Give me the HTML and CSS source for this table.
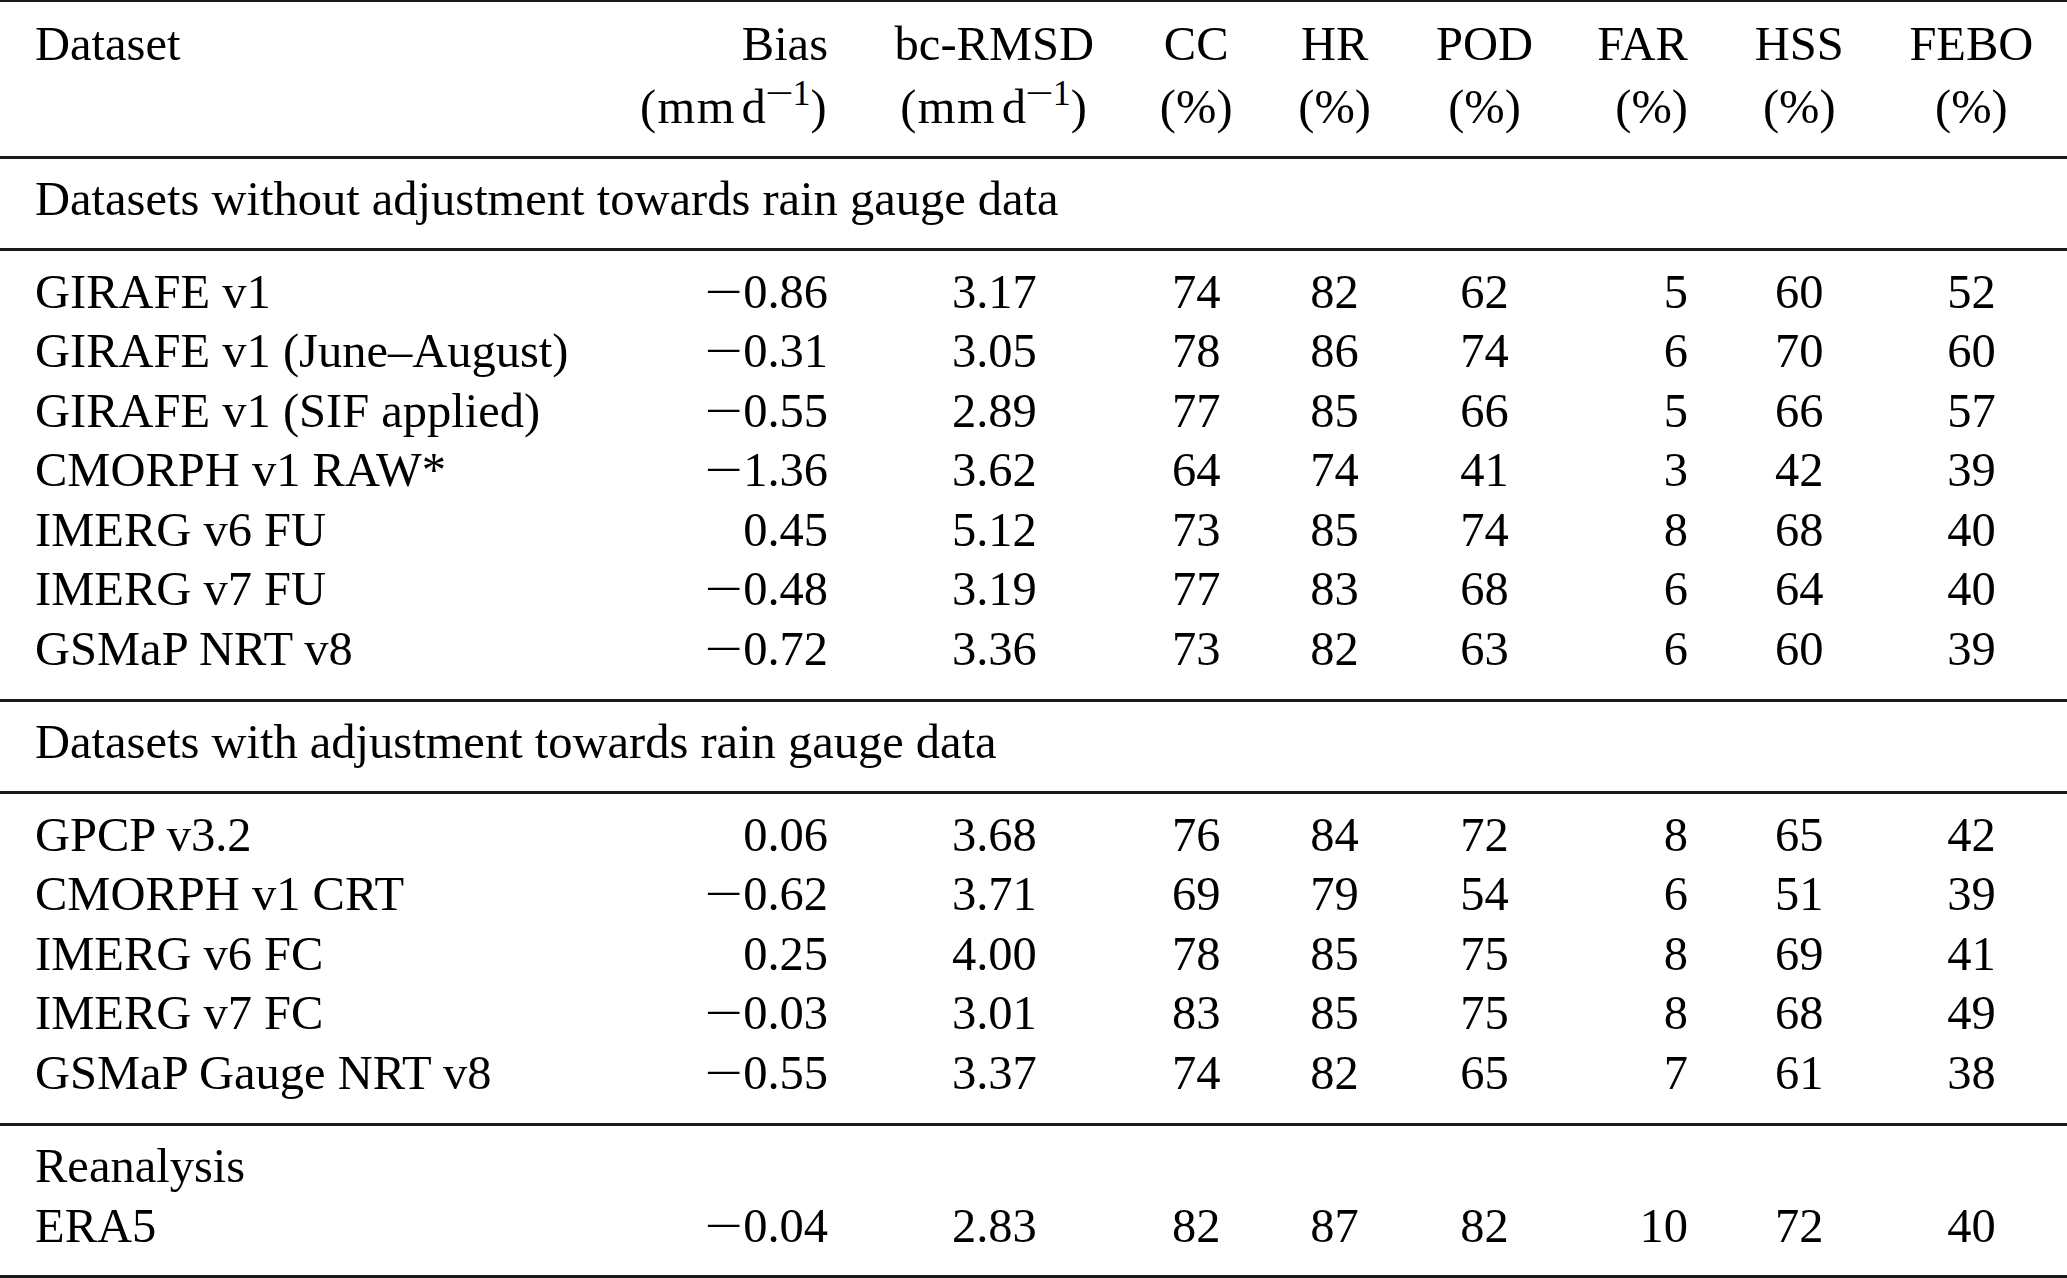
FILE: index.html
```html
<!DOCTYPE html>
<html lang="en">
<head>
<meta charset="utf-8">
<title>Dataset evaluation scores</title>
<link rel="stylesheet" href="styles.css">
</head>
<body>
<table class="results">
  <colgroup>
    <col class="w-name"><col class="w-bias"><col class="w-rmsd"><col class="w-cc"><col class="w-hr">
    <col class="w-pod"><col class="w-far"><col class="w-hss"><col class="w-febo">
  </colgroup>
  <thead>
    <tr>
      <th>Dataset</th>
      <th><span class="line">Bias</span><span class="line unit">(mm&#8202;d<sup class="exp"><span class="minus">−</span>1</sup>)</span></th>
      <th><span class="line">bc-RMSD</span><span class="line unit">(mm&#8202;d<sup class="exp"><span class="minus">−</span>1</sup>)</span></th>
      <th><span class="line">CC</span><span class="line">(%)</span></th>
      <th><span class="line">HR</span><span class="line">(%)</span></th>
      <th><span class="line">POD</span><span class="line">(%)</span></th>
      <th><span class="line">FAR</span><span class="line">(%)</span></th>
      <th><span class="line">HSS</span><span class="line">(%)</span></th>
      <th><span class="line">FEBO</span><span class="line">(%)</span></th>
    </tr>
  </thead>
  <tbody class="section">
    <tr><td colspan="9">Datasets without adjustment towards rain gauge data</td></tr>
  </tbody>
  <tbody class="group">
    <tr><td>GIRAFE v1</td><td><span class="minus">−</span>0.86</td><td>3.17</td><td>74</td><td>82</td><td>62</td><td>5</td><td>60</td><td>52</td></tr>
    <tr><td>GIRAFE v1 (June–August)</td><td><span class="minus">−</span>0.31</td><td>3.05</td><td>78</td><td>86</td><td>74</td><td>6</td><td>70</td><td>60</td></tr>
    <tr><td>GIRAFE v1 (SIF applied)</td><td><span class="minus">−</span>0.55</td><td>2.89</td><td>77</td><td>85</td><td>66</td><td>5</td><td>66</td><td>57</td></tr>
    <tr><td>CMORPH v1 RAW*</td><td><span class="minus">−</span>1.36</td><td>3.62</td><td>64</td><td>74</td><td>41</td><td>3</td><td>42</td><td>39</td></tr>
    <tr><td>IMERG v6 FU</td><td>0.45</td><td>5.12</td><td>73</td><td>85</td><td>74</td><td>8</td><td>68</td><td>40</td></tr>
    <tr><td>IMERG v7 FU</td><td><span class="minus">−</span>0.48</td><td>3.19</td><td>77</td><td>83</td><td>68</td><td>6</td><td>64</td><td>40</td></tr>
    <tr><td>GSMaP NRT v8</td><td><span class="minus">−</span>0.72</td><td>3.36</td><td>73</td><td>82</td><td>63</td><td>6</td><td>60</td><td>39</td></tr>
  </tbody>
  <tbody class="section">
    <tr><td colspan="9">Datasets with adjustment towards rain gauge data</td></tr>
  </tbody>
  <tbody class="group">
    <tr><td>GPCP v3.2</td><td>0.06</td><td>3.68</td><td>76</td><td>84</td><td>72</td><td>8</td><td>65</td><td>42</td></tr>
    <tr><td>CMORPH v1 CRT</td><td><span class="minus">−</span>0.62</td><td>3.71</td><td>69</td><td>79</td><td>54</td><td>6</td><td>51</td><td>39</td></tr>
    <tr><td>IMERG v6 FC</td><td>0.25</td><td>4.00</td><td>78</td><td>85</td><td>75</td><td>8</td><td>69</td><td>41</td></tr>
    <tr><td>IMERG v7 FC</td><td><span class="minus">−</span>0.03</td><td>3.01</td><td>83</td><td>85</td><td>75</td><td>8</td><td>68</td><td>49</td></tr>
    <tr><td>GSMaP Gauge NRT v8</td><td><span class="minus">−</span>0.55</td><td>3.37</td><td>74</td><td>82</td><td>65</td><td>7</td><td>61</td><td>38</td></tr>
  </tbody>
  <tbody class="group last">
    <tr><td colspan="9">Reanalysis</td></tr>
    <tr><td>ERA5</td><td><span class="minus">−</span>0.04</td><td>2.83</td><td>82</td><td>87</td><td>82</td><td>10</td><td>72</td><td>40</td></tr>
  </tbody>
</table>
</body>
</html>
```

FILE: styles.css
```css
html, body {
  margin: 0;
  padding: 0;
  background: #ffffff;
  overflow: hidden;
}

.results {
  border-collapse: separate;
  border-spacing: 0;
  table-layout: fixed;
  width: 2067px;
  font-family: "Liberation Serif", "Times New Roman", serif;
  font-size: 48.5px;
  line-height: 59.5px;
  color: #000000;
}

.w-name { width: 600px; }
.w-bias { width: 258px; }
.w-rmsd { width: 272.6px; }
.w-cc   { width: 131.2px; }
.w-hr   { width: 145.6px; }
.w-pod  { width: 154.2px; }
.w-far  { width: 156.4px; }
.w-hss  { width: 162.6px; }
.w-febo { width: 186.4px; }

.results th,
.results td {
  padding: 0;
  font-weight: normal;
  vertical-align: top;
  white-space: nowrap;
  text-align: center;
}

/* column alignment */
.results th:first-child,
.results td:first-child {
  text-align: left;
  padding-left: 35px;
}
.results th:nth-child(2),
.results td:nth-child(2),
.results th:nth-child(7),
.results td:nth-child(7) {
  text-align: right;
  padding-right: 30px;
}
.results th:nth-child(9),
.results td:nth-child(9) {
  padding-right: 4.8px;
}

/* math-style minus: wider bar, a little more room */
.minus {
  display: inline-block;
  transform: scaleX(1.4);
  margin: 0 6px 0 2.5px;
}

/* header */
.results thead th {
  border-top: 2px solid #1a1a1a;
  padding-top: 12px;
  padding-bottom: 19.5px;
}
.line {
  display: block;
}
.line + .line {
  margin-top: 3.5px;
}
.unit {
  letter-spacing: 0.03em;
}
.exp {
  font-size: 36px;
  line-height: 0;
  vertical-align: 18px;
  letter-spacing: 0;
}
.exp .minus {
  margin: 0 3px 0 2px;
}

/* rules between groups */
.results tbody tr:first-child td {
  border-top: 3px solid #1a1a1a;
}

.section td {
  padding-top: 10px;
  padding-bottom: 19.5px;
}

.group tr:first-child td {
  padding-top: 10.8px;
}
.group tr:last-child td {
  padding-bottom: 20.5px;
}
.group.last tr:last-child td {
  padding-bottom: 20px;
  border-bottom: 3px solid #1a1a1a;
}
```
